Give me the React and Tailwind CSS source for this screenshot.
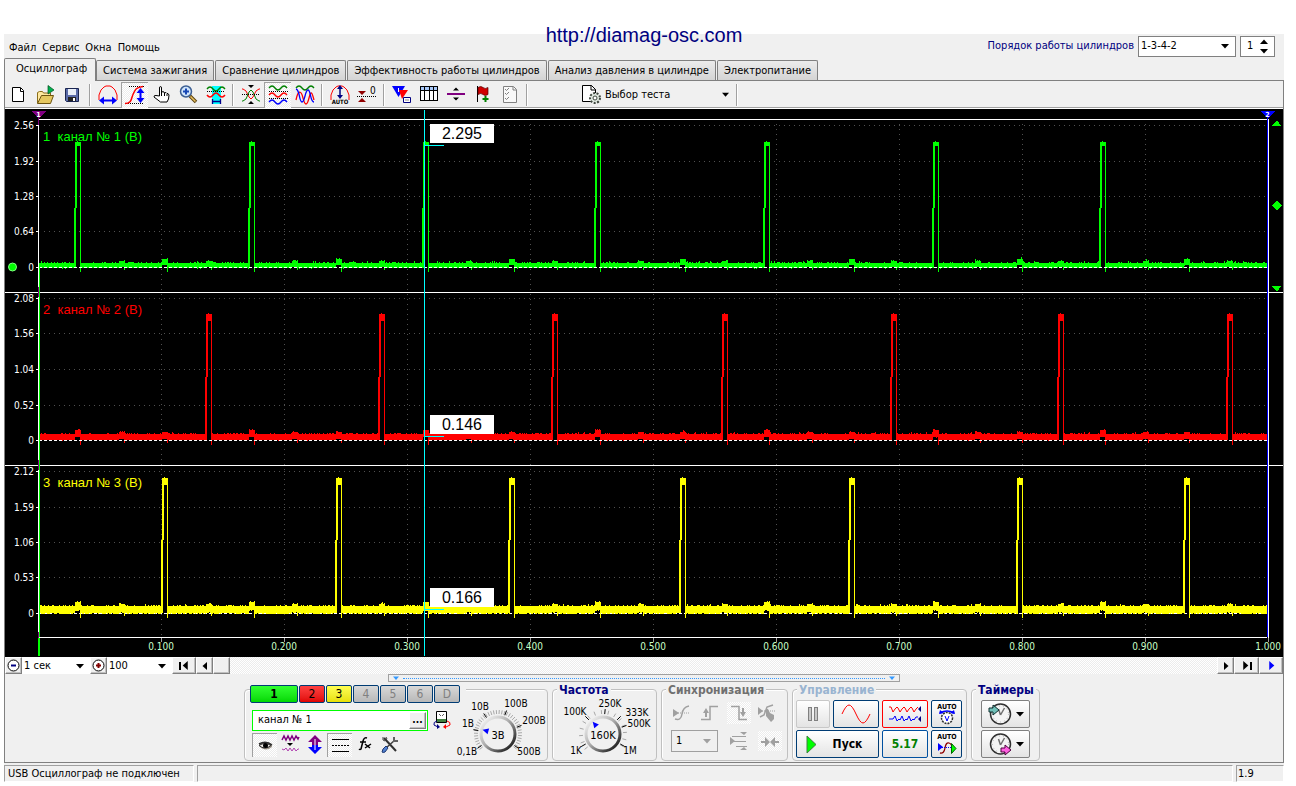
import { useState } from "react";
import clsx from "clsx";

const MENU = ["Файл", "Сервис", "Окна", "Помощь"];

const TABS = [
  "Осциллограф",
  "Система зажигания",
  "Сравнение цилиндров",
  "Эффективность работы цилиндров",
  "Анализ давления в цилиндре",
  "Электропитание",
];

const CHECKER =
  "bg-[repeating-conic-gradient(#ffffff_0_25%,#ececec_0_50%)] bg-[length:2px_2px]";

const RAISED =
  "border border-t-white border-l-white border-r-[#808080] border-b-[#808080] bg-[#f0f0f0] shadow-[inset_-1px_-1px_0_#c0c0c0]";

/* ---------- toolbar icons ---------- */

function Icon({ w = 24, h = 22, children, crisp }) {
  return (
    <svg
      width={w}
      height={h}
      viewBox={`0 0 ${w} ${h}`}
      fill="none"
      className="shrink-0"
      shapeRendering={crisp ? "crispEdges" : undefined}
      aria-hidden="true"
    >
      {children}
    </svg>
  );
}

// three half-waves, 18px long
const wave = (y, a) => `M3 ${y} q3 ${-2 * a} 6 0 t6 0 t6 0`;

const TOOLBAR = [
  [
    {
      label: "Новый",
      icon: (
        <Icon>
          <path d="M5.500 3.500h8l3 3v11h-11z" fill="#fff" stroke="#000" />
          <path d="M13.500 4v3.500h3" stroke="#000" />
        </Icon>
      ),
    },
    {
      label: "Открыть",
      icon: (
        <Icon>
          <path d="M3.500 19V8.500l2-1h3l1 1.500h7v3" fill="#ffe9a0" stroke="#8a6d1a" />
          <path d="M3.500 19.500l4-8h12l-3 8z" fill="#e5c860" stroke="#6b5310" />
          <path d="M14 1.500l6 4.500-6 4z" fill="#00b050" stroke="#004d1a" strokeWidth=".7" />
        </Icon>
      ),
    },
    {
      label: "Сохранить",
      icon: (
        <Icon>
          <path d="M4.500 4.500h13v13h-12l-1-1z" fill="#5a6ba8" stroke="#1a2550" />
          <path d="M7 5h8v6H7z" fill="#e8eef8" />
          <path d="M7 13h8v4H7z" fill="#222" />
          <path d="M12 14h2v3h-2z" fill="#fff" />
        </Icon>
      ),
    },
  ],
  [
    {
      label: "Масштаб по горизонтали",
      icon: (
        <Icon>
          <path d="M3 16V11l2-5 3-3 2-1h4l2 1 3 3 2 5v5" stroke="#f00" />
          <path d="M6 16.500h12" stroke="#00f" strokeWidth="2" />
          <path d="M3 16.500l5-4v8zM21 16.500l-5-4v8z" fill="#00f" />
        </Icon>
      ),
    },
    {
      label: "Масштаб по вертикали",
      pressed: true,
      icon: (
        <Icon>
          <path d="M6 2.500h16M5 19.500h16" stroke="#000" strokeDasharray="1 1" />
          <path d="M2 19.500c7 0 6-5 8-9s2-7 10-8" stroke="#f00" strokeWidth="1.500" />
          <path d="M17.500 7v8" stroke="#00f" strokeWidth="2" />
          <path d="M17.500 4l-4 5h8zM17.500 19l-4-5h8z" fill="#00f" />
        </Icon>
      ),
    },
    {
      label: "Перемещение",
      icon: (
        <Icon>
          <path
            d="M9.500 12V4q0-1.500 1-1.500t1 1.500v5l1-1.500 1.500.5.500 1 1.500-.500 1 1 1 0 1 1.500-.500 4-1.500 3H10.500L4 13q0-2 2-1.500z"
            fill="#fff"
            stroke="#000"
          />
          <path d="M11.500 9v3M14.500 9v3M17 10v2" stroke="#000" />
        </Icon>
      ),
    },
    {
      label: "Увеличить",
      icon: (
        <Icon>
          <circle cx="9" cy="7.500" r="5.500" fill="#cfe4fa" stroke="#3c5f93" strokeWidth="1.500" />
          <path d="M9 4.500v6M6 7.500h6" stroke="#1747b5" strokeWidth="2" />
          <path d="M13 12l6 6" stroke="#5a4210" strokeWidth="3.500" />
          <path d="M13.500 12.500l5 5" stroke="#e8c060" strokeWidth="1.500" />
        </Icon>
      ),
    },
    {
      label: "Интервал",
      icon: (
        <Icon>
          <path d="M8 2h9v18H8z" fill="#0ff" />
          <path d={wave(5, 2)} stroke="#008000" strokeWidth="1.300" />
          <path d="M3 7.500h18" stroke="#000" strokeDasharray="1 1" />
          <path d={wave(11, -2)} stroke="#f00" strokeWidth="1.500" />
          <path d="M8.500 17.500h8M8.500 15v5M16.500 15v5" stroke="#00008b" strokeWidth="1.300" />
        </Icon>
      ),
    },
  ],
  [
    {
      label: "Совместить",
      icon: (
        <Icon>
          <path d="M3 5h1l3 2 3 6 2 2 2-2 3-6 3-2h1" stroke="#f00" />
          <path d="M3 17h1l3-2 3-7 2-2 2 2 3 7 3 2h1" stroke="#008000" />
          <path d="M3 10.500h18" stroke="#000" strokeDasharray="1 1" />
          <path d="M9 1h6l-3 3zM9 20h6l-3-3z" fill="#000" />
        </Icon>
      ),
    },
    {
      label: "Раздельно",
      pressed: true,
      icon: (
        <Icon>
          <path d={wave(4, 2)} stroke="#008000" strokeWidth="1.300" />
          <path d={wave(11, 2)} stroke="#f00" strokeWidth="1.300" />
          <path d={wave(18, 2)} stroke="#00f" strokeWidth="1.300" />
          <path d="M3 7.500h19M3 14.500h19" stroke="#000" strokeDasharray="1 1" />
        </Icon>
      ),
    },
    {
      label: "Наложение",
      icon: (
        <Icon>
          <path d={wave(4, 2)} stroke="#008000" strokeWidth="1.300" />
          <path d="M3 16c2-10 5-10 7-2s4 8 6 0 3-6 5 2" stroke="#f00" strokeWidth="1.300" />
          <path d="M3 5c4 1 3 13 6 13s3-12 6-12 2 12 6 12" stroke="#00f" strokeWidth="1.300" />
        </Icon>
      ),
    },
  ],
  [
    {
      label: "Автомасштаб",
      icon: (
        <Icon>
          <path d="M3 16v-5l2-5 3-3 2-1h4l2 1 3 3 2 5v5" stroke="#f00" />
          <path d="M12 4v8" stroke="#000080" strokeWidth="1.500" />
          <path d="M12 1l-3 4h6zM12 15l-3-4h6z" fill="#000080" />
          <text x="12" y="20" textAnchor="middle" fontSize="6" fontWeight="700" fill="#000">
            AUTO
          </text>
        </Icon>
      ),
    },
    {
      label: "Установить ноль",
      icon: (
        <Icon>
          <path d="M2 12.500h19" stroke="#000" strokeDasharray="1 1" />
          <path d="M3 7h8l-4 4zM3 18h8l-4-4z" fill="#900000" />
          <text x="15" y="10" fontSize="10" fill="#000">
            0
          </text>
        </Icon>
      ),
    },
  ],
  [
    {
      label: "Маркеры",
      icon: (
        <Icon>
          <path d="M2 2h13L8.500 13z" fill="#00f" />
          <path d="M9 6h9l-6 9z" fill="#f00" />
          <path d="M8.500 4v4" stroke="#fff" />
          <path d="M13.500 13.500h7v5h-7z" fill="#fff" stroke="#000080" />
          <path d="M15 16h4" stroke="#888" />
        </Icon>
      ),
    },
    {
      label: "Таблица",
      icon: (
        <Icon crisp>
          <path d="M3.500 2.500h17v14h-17z" fill="#fff" stroke="#000" />
          <path d="M4 3h16v3H4z" fill="#a8c8f8" />
          <path d="M3 6.500h18M7.500 3v14M12.500 3v14M16.500 3v14" stroke="#000" />
        </Icon>
      ),
    },
    {
      label: "Разделитель",
      icon: (
        <Icon>
          <path d="M3 10h18" stroke="#800080" strokeWidth="2" />
          <path d="M12 3.500l3 3H9zM12 16.500l3-3H9z" fill="#000" />
        </Icon>
      ),
    },
    {
      label: "Добавить метку",
      icon: (
        <Icon>
          <path d="M6.500 2v16" stroke="#000" />
          <path d="M7 3.500q3-2 5 0t5 0v7q-3 2-5 0t-5 0z" fill="#d00000" stroke="#500" strokeWidth=".7" />
          <path d="M14.500 12v6M11.500 15h6" stroke="#008000" strokeWidth="2" />
        </Icon>
      ),
    },
    {
      label: "Отчёт",
      icon: (
        <Icon>
          <path d="M5.500 2.500h10l3 3v13h-13z" fill="#f8f8f8" stroke="#808080" />
          <path d="M7 5l1.500 1.500L11 4M7 9l1.500 1.500L11 8M7 14l1.500 1.500L11 13" stroke="#808080" />
          <path d="M15 3v3h3" stroke="#808080" />
        </Icon>
      ),
    },
  ],
];

function Separator() {
  return (
    <span className="flex h-[22px] w-2 justify-center">
      <span className="w-0.5 border-l border-[#a0a0a0] bg-white" />
    </span>
  );
}

function Toolbar() {
  return (
    <div className="flex h-[28px] items-center border-b border-white shadow-[inset_0_-1px_0_#a0a0a0]">
      {TOOLBAR.map((group, i) => (
        <div key={i} className="flex items-center">
          {group.map((item) => (
            <button
              key={item.label}
              aria-label={item.label}
              className={clsx(
                "flex h-[26px] w-[27px] items-center justify-center",
                item.pressed && CHECKER,
                item.pressed && "border-t border-l border-[#a0a0a0]"
              )}
            >
              {item.icon}
            </button>
          ))}
          <Separator />
        </div>
      ))}
      <button className="ml-[46px] flex h-[26px] w-[156px] items-center pl-1 pr-1">
        <Icon>
          <path d="M1.500 1.500h9l4 4v12h-13z" fill="#fff" stroke="#000" />
          <path d="M10 1v5h5" stroke="#000" />
          <circle cx="14" cy="14" r="5" fill="#dfe8df" stroke="#404840" strokeWidth="2" strokeDasharray="2 1.500" />
          <circle cx="14" cy="14" r="2" fill="#fff" stroke="#404840" />
        </Icon>
        <span className="flex-1 text-left">Выбор теста</span>
        <Arrow />
      </button>
      <Separator />
    </div>
  );
}

function Arrow({ className, color = "#000", dir = "down", size = 7 }) {
  const rotate = { down: "", up: "rotate-180", left: "rotate-90", right: "-rotate-90" }[dir];
  return (
    <svg
      width={size}
      height={size}
      viewBox="0 0 8 8"
      className={clsx("pointer-events-none shrink-0", rotate, className)}
      aria-hidden="true"
    >
      <path d="M0 2h8L4 6.500z" fill={color} />
    </svg>
  );
}

function Select({ label, options, className, arrowColor, disabled }) {
  return (
    <span className={clsx("relative flex items-center", className)}>
      <select
        aria-label={label}
        disabled={disabled}
        className="h-full w-full appearance-none bg-transparent pr-4 pl-0.5 outline-none"
      >
        {options.map((o) => (
          <option key={o}>{o}</option>
        ))}
      </select>
      <Arrow className="absolute right-1.5" color={arrowColor} size={8} />
    </span>
  );
}

/* ---------- oscillogram ---------- */

const X0 = 39;
const X1 = 1267;

const FIRE = {
  c1: [80, 254, 428, 600, 769, 938, 1105],
  c2: [211, 384, 557, 727, 896, 1063, 1232],
  c3: [167, 341, 514, 685, 854, 1022, 1189],
  c4: [124, 297, 471, 643, 812, 980, 1148],
};

const CHANNELS = [
  {
    id: 1, color: "#00ff00", top: 125, zero: 267, band: [263, 268], peak: 142, step: 208,
    ticks: [["2.56", 125], ["1.92", 161], ["1.28", 196], ["0.64", 231], ["0", 267]],
    fires: FIRE.c1, bumps: FIRE.c3, small: [...FIRE.c2, ...FIRE.c4], capH: 4,
    value: "2.295", valueY: 124, markY: 145,
  },
  {
    id: 2, color: "#ff0000", top: 298, zero: 440, band: [434, 440], peak: 314, step: 377,
    ticks: [["2.08", 298], ["1.56", 333], ["1.04", 369], ["0.52", 405], ["0", 440]],
    fires: FIRE.c2, bumps: FIRE.c1, small: [...FIRE.c3, ...FIRE.c4], capH: 7,
    value: "0.146", valueY: 415, markY: 436,
  },
  {
    id: 3, color: "#ffff00", top: 471, zero: 613, band: [606, 613], peak: 478, step: 540,
    ticks: [["2.12", 471], ["1.59", 507], ["1.06", 542], ["0.53", 577], ["0", 613]],
    fires: FIRE.c3, bumps: FIRE.c1, small: [...FIRE.c2, ...FIRE.c4], capH: 7,
    value: "0.166", valueY: 588, markY: 609,
  },
];

function noise(seed) {
  let s = seed;
  return () => {
    s = (s * 16807) % 2147483647;
    return s / 2147483647;
  };
}

function tracePath({ id, band, zero, fires, bumps, small, peak, step, capH }) {
  const rnd = noise(id * 7919);
  const near = (list, x, a, b) => list.some((f) => x >= f - a && x <= f + b);
  let d = "";
  for (let x = X0; x < X1; x++) {
    let [top, bottom] = band;
    if (near(fires, x, 4, -1)) continue;
    const r = rnd();
    if (r > 0.75) top -= 1;
    if (r > 0.98) top -= 1;
    if (rnd() > (id === 3 ? 0.4 : 0.97)) bottom += 1;
    if (near(bumps, x, 5, 0)) {
      top -= 4;
      bottom -= 3;
    } else if (near(small, x, 5, 0)) {
      top -= 2;
      bottom -= 1;
    }
    d += `M${x} ${top}h1v${bottom - top}h-1z`;
  }
  fires.forEach((f) => {
    d += `M${f - 6} ${step}h2V${zero - 1}h-2z`;
    d += `M${f - 5} ${peak}h2V${step}h-2z`;
    d += `M${f - 5} ${peak}h2v-1h1v1h3v${capH}h-6z`;
    d += `M${f} ${peak}h1V${zero + 5}h-1z`;
  });
  bumps.forEach((f) => (d += `M${f} ${zero - 5}h1v10h-1z`));
  small.forEach((f) => (d += `M${f} ${zero - 4}h1v7h-1z`));
  return d;
}

function Oscillogram() {
  const vlines = [1, 2, 3, 4, 5, 6, 7, 8, 9];
  return (
    <svg
      viewBox="5 109 1278 548"
      className="block h-auto w-full bg-black font-['DejaVu_Sans_Condensed','Liberation_Sans',sans-serif]"
      shapeRendering="crispEdges"
      role="img"
      aria-label="Осциллограмма"
    >
      <g stroke="#505050" strokeDasharray="1 4">
        {CHANNELS.flatMap((c) =>
          c.ticks.slice(0, 4).map(([t, y]) => <path key={c.id + t} d={`M44 ${y + 0.5}H${X1}`} />)
        )}
        {vlines.map((i) => (
          <path key={i} d={`M${38.5 + i * 123} 124V637`} />
        ))}
      </g>

      {CHANNELS.map((c) => (
        <g key={c.id}>
          {c.id === 3 && <path d={`M39 ${c.zero + 0.5}H${X1}`} stroke="#fff" strokeDasharray="3 2" />}
          <path d={tracePath(c)} fill={c.color} />
          {c.id !== 3 && <path d={`M39 ${c.zero + 0.5}H${X1}`} stroke="#fff" strokeDasharray="3 2" />}
          {c.ticks.map(([t, y]) => (
            <g key={t}>
              <path d={`M36 ${y + 0.5}h3`} stroke="#fff" />
              <text x="34" y={y + 4} textAnchor="end" fontSize="10" fill="#fff">
                {t}
              </text>
            </g>
          ))}
          <text
            x="43"
            y={c.top + 16}
            fontSize="13"
            fill={c.color}
            className="font-['Liberation_Sans',sans-serif] whitespace-pre"
          >
            {`${c.id}  канал № ${c.id} (В)`}
          </text>
        </g>
      ))}

      <path d="M38 119.500H1267M5 292.500H1283M5 465.500H1283M38 637.500H1267" stroke="#fff" />
      <path d="M38.500 119V637M1268.500 119V642" stroke="#fff" />
      <path d="M1267.500 117V637" stroke="#00f" />
      <path d="M39.500 267V637" stroke="#0f0" />
      <path d="M38 638h2v18h-2z" fill="#0f0" />
      <path d="M38.500 116v9M38.500 287v10M38.500 460v10M38.500 632v6" stroke="#800080" />
      <path d="M31 111h15l-7 7z" fill="#800080" />
      <path d="M1260 111h15l-7 7z" fill="#00f" />
      <text x="38.500" y="117" textAnchor="middle" fontSize="7" fontWeight="700" fill="#fff">
        1
      </text>
      <text x="1267.500" y="117" textAnchor="middle" fontSize="7" fontWeight="700" fill="#fff">
        2
      </text>

      {[...vlines, 10].map((i) => (
        <g key={i}>
          <path d={`M${38.5 + i * 123} 638v4`} stroke="#a0a0a0" />
          <text x={38 + i * 123} y="650" textAnchor="middle" fontSize="10" fill="#c8ffc8">
            {i === 10 ? "1.000" : `0.${i}00`}
          </text>
        </g>
      ))}

      <g fill="#0f0">
        <path d="M1272 126h9l-4-6zM1272 286h9l-4 6z" />
        <path d="M1276.500 200.500l5 5-5 5-5-5z" />
        <circle cx="12.500" cy="267" r="4" stroke="#80ff80" shapeRendering="auto" />
      </g>

      <path d="M424.500 110V656" stroke="#0ff" />
      {CHANNELS.map((c) => (
        <g key={c.id}>
          <path d={`M424 ${c.markY + 0.5}h20`} stroke="#0ff" />
          <path d={`M430 ${c.valueY}h64v19h-64z`} fill="#fff" />
          <text
            x="462"
            y={c.valueY + 15}
            textAnchor="middle"
            fontSize="16"
            className="font-['Liberation_Sans',sans-serif]"
          >
            {c.value}
          </text>
        </g>
      ))}
    </svg>
  );
}

function ScrollRow() {
  return (
    <div className="flex h-[17px] items-stretch">
      <button aria-label="Уменьшить" className={clsx("flex w-[17px] items-center justify-center", RAISED)}>
        <svg width="13" height="13" viewBox="0 0 13 13" fill="#fff" stroke="#000">
          <circle cx="6.500" cy="6.500" r="5.500" />
          <path d="M4 6.500h5" stroke="#000080" strokeWidth="2" />
        </svg>
      </button>
      <Select label="Развёртка" options={["1 сек"]} className="w-[68px] bg-white" />
      <button aria-label="Увеличить" className={clsx("flex w-[17px] items-center justify-center", RAISED)}>
        <svg width="13" height="13" viewBox="0 0 13 13" fill="#fff" stroke="#000">
          <circle cx="6.500" cy="6.500" r="5.500" />
          <path d="M4 6.500h5M6.500 4v5" stroke="#800000" strokeWidth="2" />
        </svg>
      </button>
      <Select label="Масштаб" options={["100"]} className="w-[65px] bg-white" />
      <div className={clsx("flex flex-1", CHECKER)}>
        <button aria-label="В начало" className={clsx("flex w-6 items-center justify-center", RAISED)}>
          <span className="h-2 w-0.5 bg-black" />
          <Arrow dir="left" size={9} />
        </button>
        <button aria-label="Назад" className={clsx("flex w-[17px] items-center justify-center", RAISED)}>
          <Arrow dir="left" size={8} />
        </button>
        <button aria-label="Полоса прокрутки" className={clsx("w-[17px]", RAISED)} />
      </div>
      <button aria-label="Вперёд" className={clsx("flex w-[17px] items-center justify-center", RAISED)}>
        <Arrow dir="right" size={8} />
      </button>
      <button aria-label="В конец" className={clsx("flex w-[25px] items-center justify-center", RAISED)}>
        <Arrow dir="right" size={9} />
        <span className="h-2 w-0.5 bg-black" />
      </button>
      <button aria-label="Проиграть" className={clsx("flex w-6 items-center justify-center", RAISED)}>
        <Arrow dir="right" size={9} color="#00f" />
      </button>
    </div>
  );
}

/* ---------- control panel ---------- */

function Group({ title, tone, className, children }) {
  return (
    <section
      className={clsx(
        "flex h-[72px] flex-col rounded border border-[#c0c0c0] shadow-[inset_1px_1px_0_#fff]",
        className
      )}
    >
      {title && (
        <h2 className={clsx("-mt-1.5 mb-0.5 ml-1 self-start bg-[#f0f0f0] px-0.5 text-xs/3 font-bold whitespace-nowrap", tone)}>
          {title}
        </h2>
      )}
      {children}
    </section>
  );
}

function Knob({ value, labels, pointer, ticks, width, cx, dense }) {
  const cy = 37;
  const polar = (deg, r) => {
    const a = (deg * Math.PI) / 180;
    return `${(cx + r * Math.sin(a)).toFixed(1)} ${(cy - r * Math.cos(a)).toFixed(1)}`;
  };
  const minor = [];
  for (let a = -130; a <= 130; a += dense ? 7 : 18) minor.push(a);
  return (
    <svg width={width} height="62" viewBox={`0 0 ${width} 62`} className="shrink-0 overflow-visible" role="img" aria-label={value}>
      <defs>
        <linearGradient id={`rim${cx}`} x1="0" y1="0" x2="1" y2="1">
          <stop offset="0" stopColor="#fff" />
          <stop offset=".45" stopColor="#b0b0b0" />
          <stop offset="1" stopColor="#000" />
        </linearGradient>
      </defs>
      {minor.map((a) => (
        <path key={a} d={`M${polar(a, 20)}L${polar(a, 24)}`} stroke="#a8a8a8" />
      ))}
      {ticks.map((a) => (
        <path key={a} d={`M${polar(a, 20)}L${polar(a, 25)}`} stroke="#000" />
      ))}
      <circle cx={cx} cy={cy} r="17" fill="#f0f0f0" stroke={`url(#rim${cx})`} strokeWidth="3" />
      <g transform={`rotate(${pointer} ${cx} ${cy})`}>
        <path d={`M${cx} ${cy - 16}l3 6h-6z`} fill="#00f" />
      </g>
      <text x={cx} y={cy + 5} textAnchor="middle" fontSize="11">
        {value}
      </text>
      {labels.map(([t, x, y]) => (
        <text key={t} x={x} y={y + 3} textAnchor="middle" fontSize="10">
          {t}
        </text>
      ))}
    </svg>
  );
}

const CHANNEL_BUTTONS = [
  { name: "1", style: "w-12 bg-linear-to-b from-[#30ff30] to-[#00d800] font-bold" },
  { name: "2", style: "w-[26px] bg-linear-to-b from-[#ff4040] to-[#e00000]" },
  { name: "3", style: "w-[26px] bg-linear-to-b from-[#ffff50] to-[#e8e000]" },
  { name: "4", off: true },
  { name: "5", off: true },
  { name: "6", off: true },
  { name: "D", off: true },
];

const CHANNEL_TOOLS = [
  {
    label: "Видимость",
    pressed: true,
    icon: (
      <Icon>
        <path d="M6 9q6-4 13 0v3q-6 5-12 0z" fill="#a0988c" />
        <path d="M6 10.500q6-4 12 0-6 5-12 0z" fill="#f0ece6" stroke="#303030" />
        <circle cx="12.500" cy="10.500" r="2.500" fill="#000" />
        <path d="M6 9q7-4 13 1" stroke="#303030" strokeWidth="1.500" />
      </Icon>
    ),
  },
  {
    label: "Фильтр",
    icon: (
      <Icon>
        <path d="M4 6l2-4 2 4 2-4 2 4 2-4 2 4 2-4 2 3 1-2" stroke="#800080" strokeWidth="1.500" />
        <path d="M9 9h6l-3 3z" fill="#000" />
        <path d="M4 15l2 1 2-2 2 3 2-3 2 3 2-3 2 3 2-2h1" stroke="#b040b0" />
      </Icon>
    ),
  },
  {
    label: "Смещение",
    icon: (
      <Icon>
        <path d="M12 1l7 7h-4v3H9V8H5z" fill="#800080" />
        <path d="M12 20l7-7h-4v-2H9v2H5z" fill="#00f" />
        <path d="M12 5v11" stroke="#fff" />
      </Icon>
    ),
  },
  {
    label: "Линии",
    pressed: true,
    icon: (
      <Icon crisp>
        <path d="M4 4.500h17M4 16.500h17" stroke="#000" />
        <path d="M4 10.500h17" stroke="#000" strokeDasharray="2 1" />
      </Icon>
    ),
  },
  {
    label: "Функция",
    icon: (
      <Icon>
        <path d="M14 4q-3-1-4 3l-2 8q-1 1-2 0M7 8h6" stroke="#000" strokeWidth="1.500" />
        <path d="M12 10l5 4M18 10l-6 4" stroke="#000" strokeWidth="1.500" />
      </Icon>
    ),
  },
  {
    label: "Настройка",
    icon: (
      <Icon>
        <path d="M6 4l12 13" stroke="#303030" strokeWidth="2" />
        <path d="M5 3v3l2 1 2-2-1-2" stroke="#404040" />
        <path d="M17 6L8 14" stroke="#404040" strokeWidth="1.500" />
        <path d="M16 3v4h4" stroke="#606060" strokeWidth="2" />
        <path d="M5 15l3-3 2 2-3 4q-2 1-3 0z" fill="#5080d0" stroke="#203870" />
      </Icon>
    ),
  },
];

function ChannelGroup() {
  const [name, setName] = useState("канал № 1");
  return (
    <Group className="w-[304px]">
      <div className="-mt-[5px] ml-[5px] flex gap-px self-start bg-[#f0f0f0] pr-1.5">
        {CHANNEL_BUTTONS.map((b) => (
          <button
            key={b.name}
            className={clsx(
              "h-[18px] rounded-xs border border-[#003c74] text-xs/4",
              b.off ? "w-[26px] bg-linear-to-b from-[#d8d8d8] to-[#b8b8b8] text-[#808080]" : b.style
            )}
          >
            {b.name}
          </button>
        ))}
      </div>
      <div className="flex pl-[7px]">
        <div className="w-[200px] pt-1.5">
          <div className="flex items-center gap-1">
            <div className="flex h-[21px] w-[177px] items-center border border-[#00ff00] bg-white p-px">
              <input
                aria-label="Имя канала"
                value={name}
                onChange={(e) => setName(e.target.value)}
                className="min-w-0 flex-1 px-1 outline-none"
              />
              <button className={clsx("h-[17px] w-[17px] text-[10px]/2 font-bold", RAISED)} aria-label="Выбрать имя">
                ...
              </button>
            </div>
            <button aria-label="Сменить устройство">
              <Icon w={20}>
                <path d="M4.500 2.500h10v11h-10z" fill="#fff" stroke="#000" />
                <path d="M5 10h9v3H5z" fill="#408040" />
                <path d="M7 5l2 2M12 5l-2 2" stroke="#606060" />
                <path d="M5 12q-4 1-3 4l4 2" stroke="#000080" />
                <path d="M5 15l3 3-3 2z" fill="#000080" />
                <path d="M15 12q4 1 3 4l-4 2" stroke="#f00" />
                <path d="M14 15l-3 3 3 2z" fill="#f00" />
              </Icon>
            </button>
          </div>
          <div className="flex pt-0.5">
            {CHANNEL_TOOLS.map((t) => (
              <button
                key={t.label}
                aria-label={t.label}
                className={clsx(
                  "flex h-[24px] w-[25px] items-center justify-center",
                  t.pressed && CHECKER,
                  t.pressed && "border-t border-l border-[#a0a0a0]"
                )}
              >
                {t.icon}
              </button>
            ))}
          </div>
        </div>
        <div className="-mt-1.5">
          <Knob
            value="3В"
            width={94}
            cx={46}
            dense
            pointer={-75}
            ticks={[-125, -80, -35, 20, 70, 125]}
            labels={[
              ["0,1В", 15, 55],
              ["1В", 16, 27],
              ["10В", 28, 10],
              ["100В", 64, 7],
              ["200В", 82, 24],
              ["500В", 77, 55],
            ]}
          />
        </div>
      </div>
    </Group>
  );
}

function FrequencyGroup() {
  return (
    <Group title="Частота" tone="text-[#000080]" className="w-[105px]">
      <div className="-mt-px flex-1">
        <Knob
          value="160K"
          width={103}
          cx={50}
          pointer={-40}
          ticks={[-120, -45, 5, 45, 70, 120]}
          labels={[
            ["1K", 23, 54],
            ["100K", 22, 15],
            ["250K", 57, 7],
            ["333K", 84, 16],
            ["500K", 86, 27],
            ["1M", 77, 54],
          ]}
        />
      </div>
    </Group>
  );
}

const SYNC = [
  {
    label: "Уровень",
    icon: (
      <Icon>
        <path d="M3 7v8l6-4z" fill="#a0a0a0" />
        <path d="M8 11h12" stroke="#a0a0a0" strokeDasharray="1 1" />
        <path d="M5 17q6 2 7-5t7-8" stroke="#a0a0a0" strokeWidth="1.500" />
      </Icon>
    ),
  },
  {
    label: "По фронту",
    icon: (
      <Icon>
        <path d="M3 17.500h9v-13h8" stroke="#a0a0a0" strokeWidth="1.500" />
        <path d="M8 15v-4" stroke="#a0a0a0" strokeWidth="2" />
        <path d="M8 6l3 5H5z" fill="#a0a0a0" />
      </Icon>
    ),
  },
  {
    label: "По спаду",
    pressed: true,
    icon: (
      <Icon>
        <path d="M4 4.500h8v13h8" stroke="#a0a0a0" strokeWidth="1.500" />
        <path d="M16 6v5" stroke="#a0a0a0" strokeWidth="2" />
        <path d="M16 15l3-5h-6z" fill="#a0a0a0" />
      </Icon>
    ),
  },
  {
    label: "Вручную",
    icon: (
      <Icon>
        <path d="M3 5v8l5-4z" fill="#a0a0a0" />
        <path d="M7 9h13" stroke="#a0a0a0" strokeDasharray="1 1" />
        <path d="M5 15l4-2 3-8 6-2" stroke="#a0a0a0" strokeWidth="1.500" />
        <path d="M11 7l2 0 2 4 4 2v4l-3 3-5-6z" fill="#a0a0a0" />
      </Icon>
    ),
  },
];

function SyncGroup() {
  return (
    <Group title="Синхронизация" tone="text-[#707070]" className="w-[127px]">
      <div className="flex justify-between px-2 pt-1">
        {SYNC.map((s) => (
          <button
            key={s.label}
            aria-label={s.label}
            className={clsx("flex h-[22px] w-6 items-center justify-center", s.pressed && CHECKER)}
          >
            {s.icon}
          </button>
        ))}
      </div>
      <div className="flex items-center gap-1.5 pt-1.5 pl-[9px]">
        <Select label="Канал синхронизации" options={["1"]} className="mr-1 h-[22px] w-[47px] border border-[#a0a0a0] pl-0.5" arrowColor="#a0a0a0" />
        <button aria-label="Границы">
          <Icon h={20}>
            <path d="M2 6v8l5-4z" fill="#a0a0a0" />
            <path d="M6 10.500h12M4 5.500h14M8 15.500h11" stroke="#a0a0a0" />
            <path d="M12 1h7l-3 3zM12 19h7l-3-3z" fill="#a0a0a0" />
          </Icon>
        </button>
        <button aria-label="Сжать" className={CHECKER}>
          <Icon h={20}>
            <path d="M3 11h5M16 11h5" stroke="#a0a0a0" strokeWidth="2" />
            <path d="M7 6l5 5-5 5zM17 6l-5 5 5 5z" fill="#a0a0a0" />
          </Icon>
        </button>
      </div>
    </Group>
  );
}

const XP_BUTTON =
  "flex h-7 items-center justify-center rounded-xs border bg-linear-to-b from-white to-[#e4e4e4]";

function ControlGroup() {
  return (
    <Group title="Управление" tone="text-[#99b4d1]" className="w-[175px]">
      <div className="grid grid-cols-[34px_46px_46px_31px] gap-x-[3px] gap-y-0.5 pt-0.5 pl-[3px]">
        <button aria-label="Пауза" className={clsx(XP_BUTTON, "border-[#c8c8c8]")}>
          <Icon w={14} h={16} crisp>
            <path d="M2.500 1.500h3v13h-3zM8.500 1.500h3v13h-3z" fill="#c8c8c8" stroke="#808080" />
          </Icon>
        </button>
        <button aria-label="Однократно" className={clsx(XP_BUTTON, "border-[#003c74]")}>
          <Icon w={30}>
            <path d="M1 11Q5 2 8 2t7 9 7 9 7-9" stroke="#f00" />
          </Icon>
        </button>
        <button aria-label="Две осциллограммы" className={clsx(XP_BUTTON, "border-[#ff0000]")}>
          <Icon w={34}>
            <path d="M1 4h2l2 5 2-3 2-2 1 1 2 4 2-3 2-2 1 1 2 4 2-3 2-2 1 1 2 4 2-3 2-2" stroke="#f00" />
            <path d="M1 16h4l2-3 2 5 2-2 1 1 2-4 2 5 2-2 1 1 2-4 2 5 2-2 1 1 2-3h2" stroke="#00f" />
            <path d="M33 3v6l-3-3zM33 13v6l-3-3z" fill="#000080" />
          </Icon>
        </button>
        <button aria-label="Автонастройка" className={clsx(XP_BUTTON, "border-[#003c74]")}>
          <Icon w={22} h={24}>
            <text x="11" y="7" textAnchor="middle" fontSize="7" fontWeight="700" fill="#000">
              AUTO
            </text>
            <path d="M4 11q7-4 14 0" stroke="#00f" strokeWidth="1.500" />
            <path d="M3 12l1-4 4 3zM19 12l-1-4-4 3z" fill="#00f" />
            <circle cx="11" cy="16" r="5.500" fill="#fff" stroke="#303030" strokeDasharray="2 1" strokeWidth="1.500" />
            <path d="M9 14l2 5 2-5" stroke="#00f" />
          </Icon>
        </button>
        <button className={clsx(XP_BUTTON, "col-span-2 border-[#003c74] pl-[9px] text-xs font-bold")}>
          <Icon w={11} h={19}>
            <path d="M1 1l9 8.500L1 18z" fill="#0f0" stroke="#408040" />
          </Icon>
          <span className="flex-1">Пуск</span>
        </button>
        <button className={clsx(XP_BUTTON, "border-[#0050a0] text-xs font-bold text-[#008000]")}>5.17</button>
        <button aria-label="Автозапуск" className={clsx(XP_BUTTON, "border-[#003c74]")}>
          <Icon w={22} h={24}>
            <text x="11" y="7" textAnchor="middle" fontSize="7" fontWeight="700" fill="#000">
              AUTO
            </text>
            <path d="M2 11l5 4-5 4z" fill="#00f" />
            <path d="M4 21q4 1 5-5t4-5 3 5" stroke="#900000" strokeWidth="1.300" />
            <path d="M2 15.500h13" stroke="#00f" strokeDasharray="1 1" />
            <path d="M15.500 11.500l4.500 5-4.500 5z" fill="#0f0" stroke="#006000" />
          </Icon>
        </button>
      </div>
    </Group>
  );
}

function Clock({ arrow }) {
  return (
    <Icon w={24} h={24}>
      <circle cx="12.500" cy="12" r="10" fill="#f4f4f4" stroke="#303030" strokeWidth="1.500" />
      <circle cx="12.500" cy="12" r="8" stroke="#b0b0b0" strokeDasharray="1 3" />
      <path d="M12.500 13l-2-6M12.500 13l4-7" stroke="#707070" strokeWidth="1.500" />
      {arrow}
    </Icon>
  );
}

function TimerGroup() {
  return (
    <Group title="Таймеры" tone="text-[#000080]" className="w-[69px]">
      <div className="flex flex-col gap-0.5 px-[9px] pt-0.5">
        <button aria-label="Таймер начала" className={clsx(XP_BUTTON, "gap-1 border-[#808080]")}>
          <Clock arrow={<path d="M1 6h4V3l6 5-6 5v-3H1z" fill="#70c0b8" stroke="#103030" />} />
          <Arrow size={8} />
        </button>
        <button aria-label="Таймер окончания" className={clsx(XP_BUTTON, "gap-1 border-[#808080]")}>
          <Clock arrow={<path d="M13 16h4v-3l6 5-6 5v-3h-4z" fill="#ff60e0" stroke="#500040" />} />
          <Arrow size={8} />
        </button>
      </div>
    </Group>
  );
}

export default function App() {
  const [tab, setTab] = useState(TABS[0]);

  return (
    <div className="bg-white pt-[34px] pr-3 pb-[5px] pl-1 font-['DejaVu_Sans_Condensed','Liberation_Sans',sans-serif] text-[11px]/4 text-black">
      <div className="relative bg-[#f0f0f0]">
        <a
          href="http://diamag-osc.com"
          className="absolute -top-[11px] left-1/2 -translate-x-1/2 font-['Liberation_Sans',sans-serif] text-xl/6 text-[#000080]"
        >
          http://diamag-osc.com
        </a>

        <header className="flex h-6 items-center justify-between pr-[9px] pl-[5px]">
          <nav className="flex gap-1.5 pt-1">
            {MENU.map((m) => (
              <button key={m}>{m}</button>
            ))}
          </nav>
          <div className="flex items-center gap-1">
            <label htmlFor="order" className="text-[#000080]">
              Порядок работы цилиндров
            </label>
            <span className="relative flex h-[21px] w-[98px] items-center border border-[#808080] bg-white">
              <select id="order" className="h-full w-full appearance-none pl-0.5 outline-none">
                <option>1-3-4-2</option>
              </select>
              <Arrow className="absolute right-1.5" size={8} />
            </span>
            <span className="flex h-[21px] w-[35px] items-center border border-[#808080] bg-white">
              <input aria-label="Номер цилиндра" defaultValue="1" className="w-4 min-w-0 flex-1 pl-1.5 outline-none" />
              <span className="flex flex-col gap-px pr-1.5">
                <button aria-label="Больше">
                  <Arrow dir="up" size={8} />
                </button>
                <button aria-label="Меньше">
                  <Arrow size={8} />
                </button>
              </span>
            </span>
          </div>
        </header>

        <div className="flex h-[22px] items-end" role="tablist">
          {TABS.map((t) => (
            <button
              key={t}
              role="tab"
              aria-selected={t === tab}
              onClick={() => setTab(t)}
              className={clsx(
                "rounded-t-xs border border-b-0 border-[#808080] whitespace-nowrap",
                t === tab
                  ? "relative z-10 -mb-px h-[23px] bg-[#f0f0f0] pr-2 pl-[11px] pb-0.5"
                  : "mr-px h-5 bg-linear-to-b from-[#ececec] to-[#d4d4d4] px-1.5"
              )}
            >
              {t}
            </button>
          ))}
        </div>

        <main className="border border-[#808080]">
          <Toolbar />
          <Oscillogram />
          <ScrollRow />
          <div className="mx-auto flex h-2 w-2/5 items-center border border-[#a0a0a0] px-1">
            <Arrow color="#3399ff" size={6} />
            <span className="mx-1 flex-1 border-t border-dotted border-[#3399ff]" />
            <Arrow color="#3399ff" size={6} />
          </div>
          <div className="flex justify-center gap-1 pt-[7px] pr-1 pb-px">
            <ChannelGroup />
            <FrequencyGroup />
            <SyncGroup />
            <ControlGroup />
            <TimerGroup />
          </div>
        </main>

        <footer className="flex h-[19px] gap-[3px] pt-0.5">
          <div className="w-[190px] border border-[#a0a0a0] border-r-white border-b-white pl-[3px]">
            USB Осциллограф не подключен
          </div>
          <div className="flex-1 border border-[#a0a0a0] border-r-white border-b-white" />
          <div className="w-12 border border-[#a0a0a0] border-r-white border-b-white pl-px">1.9</div>
        </footer>
      </div>
    </div>
  );
}
